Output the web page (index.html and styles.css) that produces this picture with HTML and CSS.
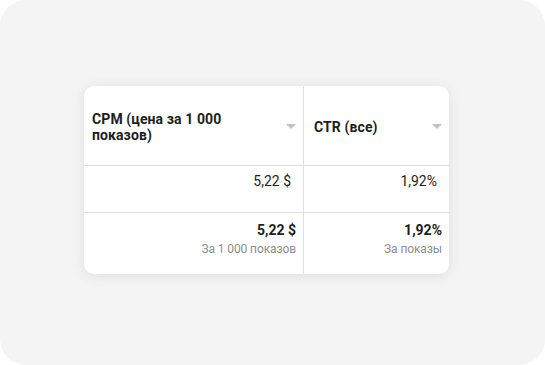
FILE: index.html
```html
<!DOCTYPE html>
<html lang="ru">
<head>
<meta charset="utf-8">
<link rel="stylesheet" href="styles.css">
</head>
<body>
<div class="frame">
  <div class="card">
    <div class="cell head first">
      <span class="title">CPM (цена за 1 000 показов)</span>
      <span class="arrow"></span>
    </div>
    <div class="cell head">
      <span class="title">CTR (все)</span>
      <span class="arrow"></span>
    </div>
    <div class="cell row first"><span class="val">5,22 $</span></div>
    <div class="cell row"><span class="val">1,92%</span></div>
    <div class="cell total first">
      <span class="big">5,22 $</span>
      <span class="sub">За 1 000 показов</span>
    </div>
    <div class="cell total">
      <span class="big">1,92%</span>
      <span class="sub">За показы</span>
    </div>
  </div>
</div>
</body>
</html>
```

FILE: styles.css
```css
html, body {
  margin: 0;
  padding: 0;
  background: #ffffff;
}
body {
  font-family: Roboto, "Liberation Sans", sans-serif;
  color: #1c1e21;
}
.frame {
  width: 545px;
  height: 365px;
  background: #f4f4f4;
  border-radius: 26px;
  box-sizing: border-box;
  padding: 86px 0 0 84px;
}
.card {
  width: 365px;
  height: 188px;
  background: #ffffff;
  border-radius: 10px;
  box-shadow: 0 2px 14px rgba(0, 0, 0, 0.09);
  display: grid;
  grid-template-columns: 220px 145px;
  grid-template-rows: 80px 47px 61px;
  overflow: hidden;
}
.cell {
  box-sizing: border-box;
}
.cell.first {
  border-right: 1px solid #dddfe2;
}
.head {
  display: flex;
  align-items: center;
  padding: 0 7px 0 8px;
  border-bottom: 1px solid #dddfe2;
  gap: 10px;
}
.head:not(.first) {
  padding-left: 10px;
}
.title {
  flex: 1;
  font-size: 14px;
  font-weight: 700;
  line-height: 16px;
  padding-right: 20px;
  margin-top: 2px;
  letter-spacing: 0.1px;
}
.arrow {
  width: 0;
  height: 0;
  border-left: 5px solid transparent;
  border-right: 5px solid transparent;
  border-top: 5px solid #bec3c9;
  margin-top: 2px;
}
.row {
  border-bottom: 1px solid #dddfe2;
  display: flex;
  justify-content: flex-end;
  align-items: flex-start;
  padding: 7px 12px 0 0;
}
.val {
  font-size: 14px;
  line-height: 16px;
}
.total {
  display: flex;
  flex-direction: column;
  align-items: flex-end;
  padding: 9px 7px 0 0;
}
.big {
  font-size: 14px;
  font-weight: 700;
  line-height: 17px;
}
.sub {
  font-size: 12px;
  line-height: 16px;
  color: #8d8d8d;
  margin-top: 2px;
  letter-spacing: -0.1px;
}
```
